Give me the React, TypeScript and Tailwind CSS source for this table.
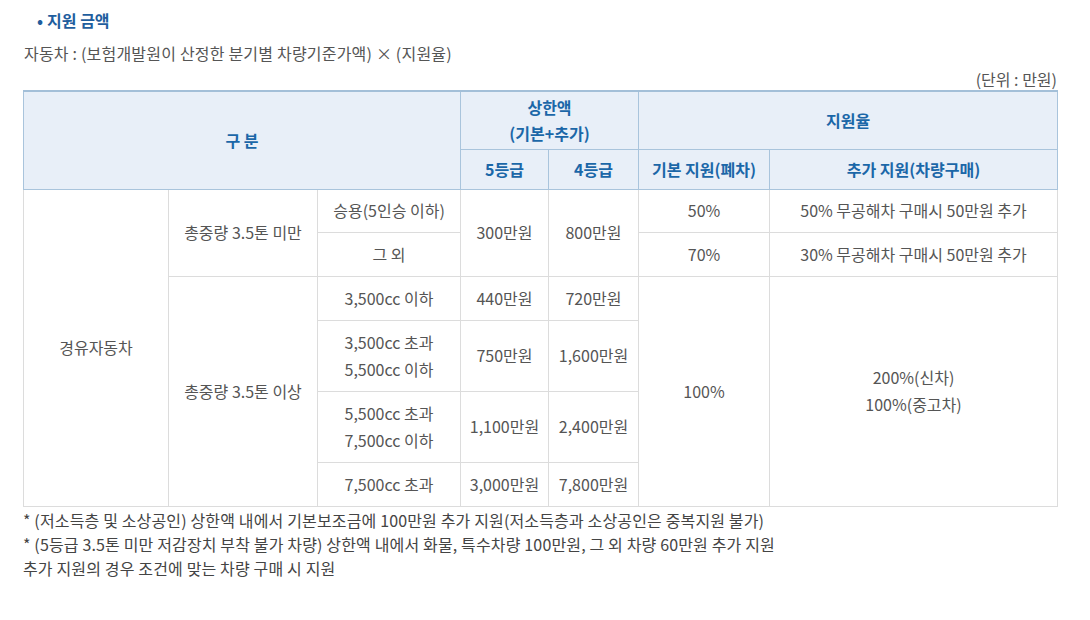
import { FC } from "react";

const FONT = '"Noto Sans CJK KR", "Noto Sans", sans-serif';

const th = "border border-[#a9c4dc] text-[#1b67a8] font-bold text-[16px] text-center align-middle";
const td = "border border-[#dcdcdc] text-[#555555] text-[16px] leading-[27px] text-center align-middle";

const App: FC = (): JSX.Element => {
  return (
    <div className="w-[1090px] h-[620px] bg-white px-[23px] pt-[8px]" style={{ fontFamily: FONT }}>
      <div className="flex items-center h-[24px] pl-[14px] text-[16px] font-bold text-[#1f5e9e]">
        <span className="mr-[4px] text-[16px]">•</span>
        <span>지원 금액</span>
      </div>
      <p className="mt-[9px] text-[16px] leading-[24px] text-[#555555] pl-[1px] tracking-[0.2px]">
        자동차 : (보험개발원이 산정한 분기별 차량기준가액) × (지원율)
      </p>
      <p className="mt-[3px] w-[1034px] text-right text-[16px] leading-[22px] text-[#555555]">(단위 : 만원)</p>

      <table className="w-[1034px] table-fixed border-collapse">
        <colgroup>
          <col className="w-[145px]" />
          <col className="w-[149px]" />
          <col className="w-[143px]" />
          <col className="w-[88px]" />
          <col className="w-[90px]" />
          <col className="w-[131px]" />
          <col className="w-[288px]" />
        </colgroup>
        <thead className="bg-[#e8eff8]">
          <tr className="h-[58px]">
            <th colSpan={3} rowSpan={2} className={`${th} border-t-2 border-t-[#a3bfd8]`}>
              구 분
            </th>
            <th colSpan={2} className={`${th} leading-[26px] border-t-2 border-t-[#a3bfd8]`}>
              상한액
              <br />
              (기본+추가)
            </th>
            <th colSpan={2} className={`${th} border-t-2 border-t-[#a3bfd8]`}>
              지원율
            </th>
          </tr>
          <tr className="h-[40px]">
            <th className={th}>5등급</th>
            <th className={th}>4등급</th>
            <th className={th}>기본 지원(폐차)</th>
            <th className={th}>추가 지원(차량구매)</th>
          </tr>
        </thead>
        <tbody>
          <tr className="h-[43px]">
            <td rowSpan={6} className={td}>경유자동차</td>
            <td rowSpan={2} className={td}>총중량 3.5톤 미만</td>
            <td className={td}>승용(5인승 이하)</td>
            <td rowSpan={2} className={td}>300만원</td>
            <td rowSpan={2} className={td}>800만원</td>
            <td className={td}>50%</td>
            <td className={td}>50% 무공해차 구매시 50만원 추가</td>
          </tr>
          <tr className="h-[44px]">
            <td className={td}>그 외</td>
            <td className={td}>70%</td>
            <td className={td}>30% 무공해차 구매시 50만원 추가</td>
          </tr>
          <tr className="h-[44px]">
            <td rowSpan={4} className={td}>총중량 3.5톤 이상</td>
            <td className={td}>3,500cc 이하</td>
            <td className={td}>440만원</td>
            <td className={td}>720만원</td>
            <td rowSpan={4} className={td}>100%</td>
            <td rowSpan={4} className={td}>
              200%(신차)
              <br />
              100%(중고차)
            </td>
          </tr>
          <tr className="h-[71px]">
            <td className={td}>
              3,500cc 초과
              <br />
              5,500cc 이하
            </td>
            <td className={td}>750만원</td>
            <td className={td}>1,600만원</td>
          </tr>
          <tr className="h-[71px]">
            <td className={td}>
              5,500cc 초과
              <br />
              7,500cc 이하
            </td>
            <td className={td}>1,100만원</td>
            <td className={td}>2,400만원</td>
          </tr>
          <tr className="h-[44px]">
            <td className={td}>7,500cc 초과</td>
            <td className={td}>3,000만원</td>
            <td className={td}>7,800만원</td>
          </tr>
        </tbody>
      </table>

      <div className="mt-[1px] text-[16px] leading-[24px] text-[#444444] tracking-[0.15px]">
        <p>* (저소득층 및 소상공인) 상한액 내에서 기본보조금에 100만원 추가 지원(저소득층과 소상공인은 중복지원 불가)</p>
        <p>* (5등급 3.5톤 미만 저감장치 부착 불가 차량) 상한액 내에서 화물, 특수차량 100만원, 그 외 차량 60만원 추가 지원</p>
        <p>추가 지원의 경우 조건에 맞는 차량 구매 시 지원</p>
      </div>
    </div>
  );
};

export default App;
